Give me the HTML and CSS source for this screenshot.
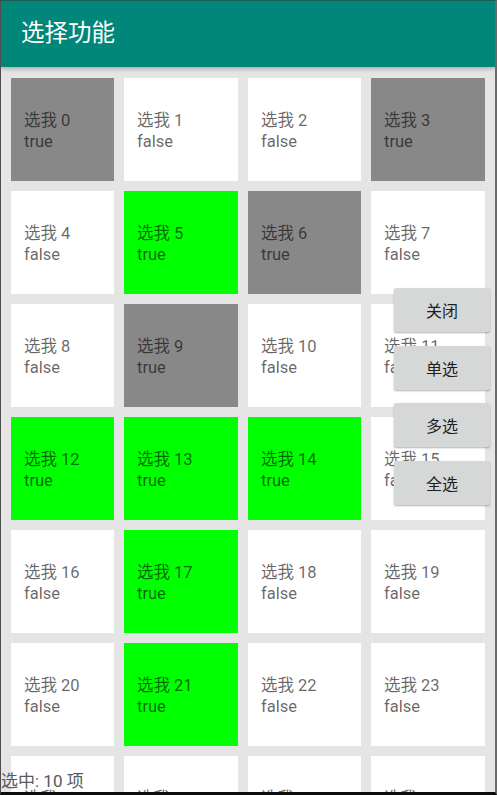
FILE: index.html
```html
<!DOCTYPE html>
<html lang="zh">
<head>
<meta charset="utf-8">
<title>选择功能</title>
<link rel="stylesheet" href="styles.css">
</head>
<body>
<div class="frame">
  <header class="appbar"><h1 class="title">选择功能</h1></header>
  <main class="content">
    <div class="grid">
      <div class="tile gray"><span>选我 0</span><span>true</span></div>
      <div class="tile"><span>选我 1</span><span>false</span></div>
      <div class="tile"><span>选我 2</span><span>false</span></div>
      <div class="tile gray"><span>选我 3</span><span>true</span></div>
      <div class="tile"><span>选我 4</span><span>false</span></div>
      <div class="tile green"><span>选我 5</span><span>true</span></div>
      <div class="tile gray"><span>选我 6</span><span>true</span></div>
      <div class="tile"><span>选我 7</span><span>false</span></div>
      <div class="tile"><span>选我 8</span><span>false</span></div>
      <div class="tile gray"><span>选我 9</span><span>true</span></div>
      <div class="tile"><span>选我 10</span><span>false</span></div>
      <div class="tile"><span>选我 11</span><span>false</span></div>
      <div class="tile green"><span>选我 12</span><span>true</span></div>
      <div class="tile green"><span>选我 13</span><span>true</span></div>
      <div class="tile green"><span>选我 14</span><span>true</span></div>
      <div class="tile"><span>选我 15</span><span>false</span></div>
      <div class="tile"><span>选我 16</span><span>false</span></div>
      <div class="tile green"><span>选我 17</span><span>true</span></div>
      <div class="tile"><span>选我 18</span><span>false</span></div>
      <div class="tile"><span>选我 19</span><span>false</span></div>
      <div class="tile"><span>选我 20</span><span>false</span></div>
      <div class="tile green"><span>选我 21</span><span>true</span></div>
      <div class="tile"><span>选我 22</span><span>false</span></div>
      <div class="tile"><span>选我 23</span><span>false</span></div>
      <div class="tile"><span>选我 24</span><span>false</span></div>
      <div class="tile"><span>选我 25</span><span>false</span></div>
      <div class="tile"><span>选我 26</span><span>false</span></div>
      <div class="tile"><span>选我 27</span><span>false</span></div>
    </div>
    <div class="menu">
      <button class="btn">关闭</button>
      <button class="btn">单选</button>
      <button class="btn">多选</button>
      <button class="btn">全选</button>
    </div>
    <div class="count">选中: 10 项</div>
  </main>
</div>
</body>
</html>
```

FILE: styles.css
```css
html, body {
  margin: 0;
  padding: 0;
  background: #111;
}
.frame {
  box-sizing: border-box;
  width: 497px;
  height: 795px;
  border-top: 1px solid #1d5a53;
  border-left: 1px solid #4e4e4e;
  border-right: 2px solid #6a6a6a;
  border-bottom: 3px solid #0c0c0c;
  overflow: hidden;
  display: flex;
  flex-direction: column;
  font-family: Roboto, "Noto Sans CJK SC", sans-serif;
  background: #e5e5e5;
}
.appbar {
  height: 66px;
  flex: none;
  background: #00877a;
  display: flex;
  align-items: center;
  padding-left: 20px;
  padding-bottom: 5px;
  box-sizing: border-box;
  box-shadow: 0 2px 4px rgba(0,0,0,0.25);
  position: relative;
  z-index: 2;
}
.title {
  margin: 0;
  color: #fff;
  font-weight: 400;
  font-size: 23.5px;
  font-family: "Noto Sans CJK SC", Roboto, sans-serif;
  line-height: 1;
}
.content {
  flex: 1;
  position: relative;
  overflow: hidden;
}
.grid {
  display: grid;
  grid-template-columns: 103px 114px 113px 114px;
  grid-auto-rows: 103px;
  gap: 10px;
  padding: 11px 0 0 10px;
}
.tile {
  background: #fff;
  display: flex;
  flex-direction: column;
  justify-content: center;
  padding-left: 13px;
  padding-top: 3px;
  color: rgba(0,0,0,0.6);
  font-size: 16.5px;
  line-height: 21px;
}
.tile.gray { background: #888888; }
.tile.green { background: #00ff00; }
.menu {
  position: absolute;
  top: 221px;
  left: 393px;
  display: flex;
  flex-direction: column;
  gap: 13.7px;
  z-index: 3;
}
.btn {
  width: 96px;
  height: 44px;
  border: none;
  border-radius: 2px;
  background: #d6d7d7;
  box-shadow: 0 1px 2px rgba(0,0,0,0.3);
  font-family: "Noto Sans CJK SC", Roboto, sans-serif;
  font-size: 16px;
  color: #1e1e1e;
  padding: 0;
}
.count {
  position: absolute;
  left: 0;
  bottom: 0;
  font-size: 17px;
  line-height: 22px;
  color: #5a5a5a;
  z-index: 3;
}
```
